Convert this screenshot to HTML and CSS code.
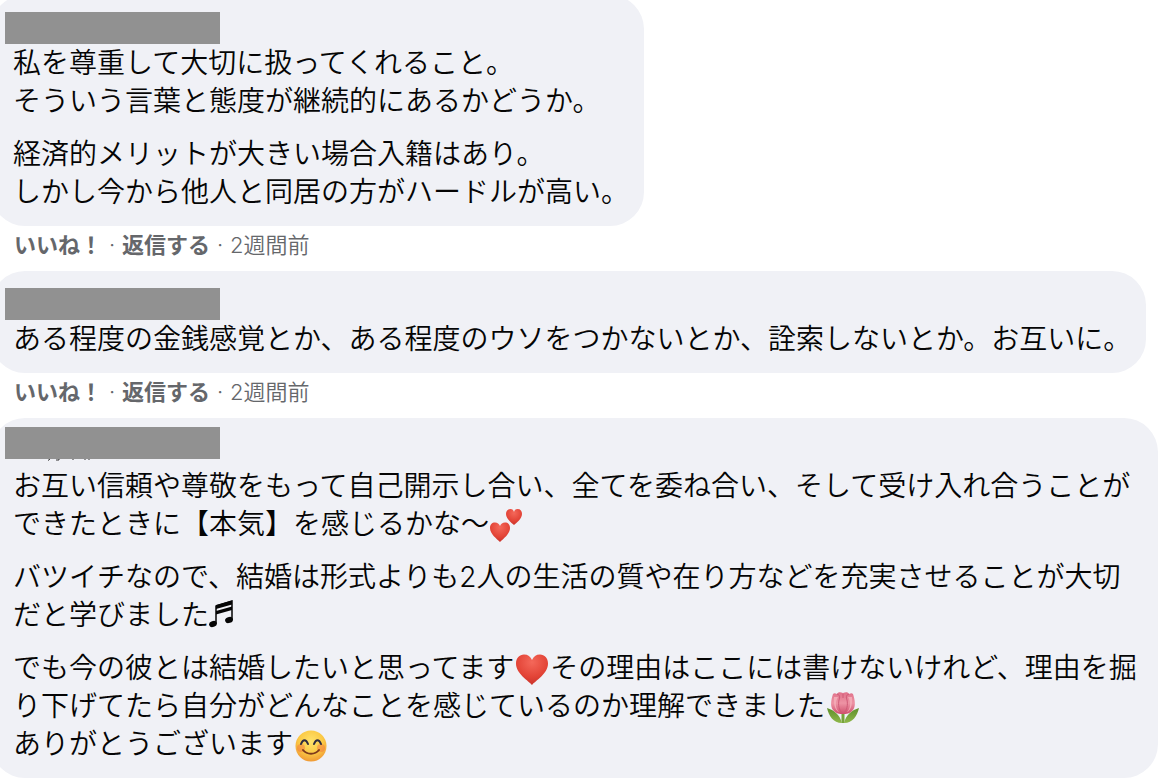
FILE: index.html
```
<!DOCTYPE html>
<html lang="ja">
<head>
    <meta charset="UTF-8">
    <title>コメント</title>
    <link rel="stylesheet" href="styles.css">
</head>
<body>

<ul class="comments">
    <li class="comment">
        <div class="bubble">
            <div class="name"><span class="mask"></span></div>
            <p>私を尊重して大切に扱ってくれること。<br>そういう言葉と態度が継続的にあるかどうか。</p>
            <p>経済的メリットが大きい場合入籍はあり。<br>しかし今から他人と同居の方がハードルが高い。</p>
        </div>
        <div class="meta">
            <button type="button">いいね！</button><i>·</i><button type="button">返信する</button><i>·</i><a href="#">2週間前</a>
        </div>
    </li>
    <li class="comment">
        <div class="bubble">
            <div class="name"><span class="mask"></span></div>
            <p>ある程度の金銭感覚とか、ある程度のウソをつかないとか、詮索しないとか。お互いに。</p>
        </div>
        <div class="meta">
            <button type="button">いいね！</button><i>·</i><button type="button">返信する</button><i>·</i><a href="#">2週間前</a>
        </div>
    </li>
    <li class="comment">
        <div class="bubble">
            <div class="name name-high">
                <span class="mask"></span>
                <svg class="rest" viewBox="0 0 44 2"><path d="M2 0l-2 1.500M11 0v1h-3M25 0v1M37 0v1M41 0v1" fill="none" stroke="#333"/></svg>
            </div>
            <p>お互い信頼や尊敬をもって自己開示し合い、全てを委ね合い、そして受け入れ合うことができたときに【本気】を感じるかな〜<svg class="emoji" viewBox="0 0 36 36">
                <defs>
                    <radialGradient id="red" cx=".5" cy=".25" r=".8">
                        <stop offset="0" stop-color="#f4685a"/>
                        <stop offset=".6" stop-color="#e34437"/>
                        <stop offset="1" stop-color="#c42f28"/>
                    </radialGradient>
                </defs>
                <path fill="url(#red)" d="M11 35C8 32 1 27 1 21C1 17.500 3 15.500 6 15.500C8.500 15.500 10 17 11 19C12 17 13.500 15.500 16 15.500C19 15.500 21 17.500 21 21C21 27 14 32 11 35Z"/>
                <path fill="url(#red)" d="M25 18C23 16 17 12 17 7C17 4 19 2 21.500 2C23.500 2 24.500 3 25 5C25.500 3 26.500 2 28.500 2C31.500 2 33 4 33 7C33 12 27 16 25 18Z"/>
            </svg></p>
            <p>バツイチなので、結婚は形式よりも2人の生活の質や在り方などを充実させることが大切だと学びました<svg class="note" viewBox="0 0 28 32">
                <path d="M7 25V8L23 3V22" fill="none" stroke="#050505" stroke-width="1.500"/>
                <path d="M7 7l16-4.500v4L7 11zM7 13l16-4.500v3.500L7 16.500z"/>
                <ellipse cx="4" cy="26" rx="4" ry="3" transform="rotate(-20 4 26)"/>
                <ellipse cx="20" cy="22" rx="4" ry="3" transform="rotate(-20 20 22)"/>
            </svg></p>
            <p>でも今の彼とは結婚したいと思ってます<svg class="emoji" viewBox="0 0 36 36">
                <path fill="url(#red)" d="M18 34C15 30 2 23 2 12.500C2 7 5.500 3.500 10 3.500C14 3.500 16.500 5.500 18 9C19.500 5.500 22 3.500 26 3.500C30.500 3.500 34 7 34 12.500C34 23 21 30 18 34Z"/>
            </svg>その理由はここには書けないけれど、理由を掘り下げてたら自分がどんなことを感じているのか理解できました<svg class="emoji" viewBox="0 0 36 36">
                <defs>
                    <linearGradient id="petal" x1="0" y1="0" x2="0" y2="1">
                        <stop offset="0" stop-color="#e0718a"/>
                        <stop offset=".5" stop-color="#ed93a4"/>
                        <stop offset="1" stop-color="#cf4e6c"/>
                    </linearGradient>
                    <linearGradient id="leaf" x1="0" y1="0" x2="0" y2="1">
                        <stop offset="0" stop-color="#5f8f2c"/>
                        <stop offset="1" stop-color="#8fb84a"/>
                    </linearGradient>
                </defs>
                <path d="M16.500 23h3v11h-3z" fill="#77a33a"/>
                <path fill="url(#leaf)" d="M17 34C15 26 9 21 2 19C4 27 8 34 17 34ZM19 34C21 26 27 21 34 19C32 27 28 34 19 34Z"/>
                <path fill="url(#petal)" d="M8 5C9 4 10 4 12 5C13 3 15 3 18 4C21 3 23 3 24 5C26 4 27 4 28 5C30 11 31 17 28 21C25 25 21 25 18 25C15 25 11 25 8 21C5 17 6 11 8 5Z"/>
                <path fill="#f3a9b5" d="M13 8C10 13 10 19 14 23C11 22 8 16 9 8ZM23 8C26 13 26 19 22 23C25 22 28 16 27 8Z"/>
                <path fill="none" stroke="#cf5a76" d="M12 5C15 6 15 8 14 11C13 16 14 21 17 24M24 5C21 6 21 8 22 11C23 16 22 21 19 24M18 5v4"/>
            </svg><br>ありがとうございます<svg class="emoji" viewBox="0 0 36 36">
                <defs>
                    <radialGradient id="face" cx=".5" cy=".35" r=".65">
                        <stop offset="0" stop-color="#ffe36b"/>
                        <stop offset=".6" stop-color="#fbc945"/>
                        <stop offset="1" stop-color="#f09a35"/>
                    </radialGradient>
                </defs>
                <circle cx="18" cy="19" r="15.500" fill="url(#face)"/>
                <circle cx="8" cy="21" r="4" fill="#f0653f" opacity=".4"/>
                <circle cx="28" cy="21" r="4" fill="#f0653f" opacity=".4"/>
                <path fill="none" stroke="#2f2c40" stroke-width="2" stroke-linecap="round" d="M8 17C10 12 13 12 15 17M21 17C23 12 26 12 28 17"/>
                <path fill="none" stroke="#7d3a1c" stroke-width="2" stroke-linecap="round" d="M10 23C14 28 22 28 26 23"/>
            </svg></p>
        </div>
    </li>
</ul>

</body>
</html>
```
FILE: styles.css
```
*{
    margin: 0;
    padding: 0;
    border: 0;
    box-sizing: border-box;
}
body{
    background-color: #fff;
    color: #050505;
    font-family: Inter, "Noto Sans CJK JP", sans-serif;
    font-size: 28px;
    font-weight: 350;
    line-height: 38px;
    overflow-x: hidden;
}
/* 左端と上端は画面の外に少しはみ出す */
.comments{
    list-style: none;
    margin: -5px 0 0 -9px;
}
.comment{
    display: flex;
    flex-direction: column;
    align-items: flex-start;
}
.bubble{
    padding: 15px 15px 15px 22px;
    border-radius: 34px;
    background-color: #f0f1f6;
}
.bubble p + p{
    margin-top: 15px;
}
.name{
    position: relative;
    height: 34px;
}
.mask{
    position: absolute;
    left: -8px;
    top: 2px;
    width: 215px;
    height: 32px;
    background-color: #919191;
}
.name-high .mask{
    top: -6px;
}
.rest{
    position: absolute;
    left: 35px;
    top: 26px;
    width: 44px;
    height: 2px;
}
.emoji{
    width: 36px;
    height: 36px;
    margin: -6px 0;
    vertical-align: -3px;
}
.note{
    width: 28px;
    height: 32px;
    margin: -4px 0;
    vertical-align: -1px;
    fill: #050505;
}
.meta{
    display: flex;
    padding: 4px 23px 11px;
    font-size: 22px;
    line-height: 30px;
    color: #65676b;
}
.meta button{
    background: none;
    font: inherit;
    font-weight: bold;
    color: inherit;
    cursor: pointer;
}
.meta i{
    width: 20px;
    font-style: normal;
    text-align: center;
}
.meta a{
    color: inherit;
    text-decoration: none;
}
.meta a:hover,.meta button:hover{
    text-decoration: underline;
}
```
